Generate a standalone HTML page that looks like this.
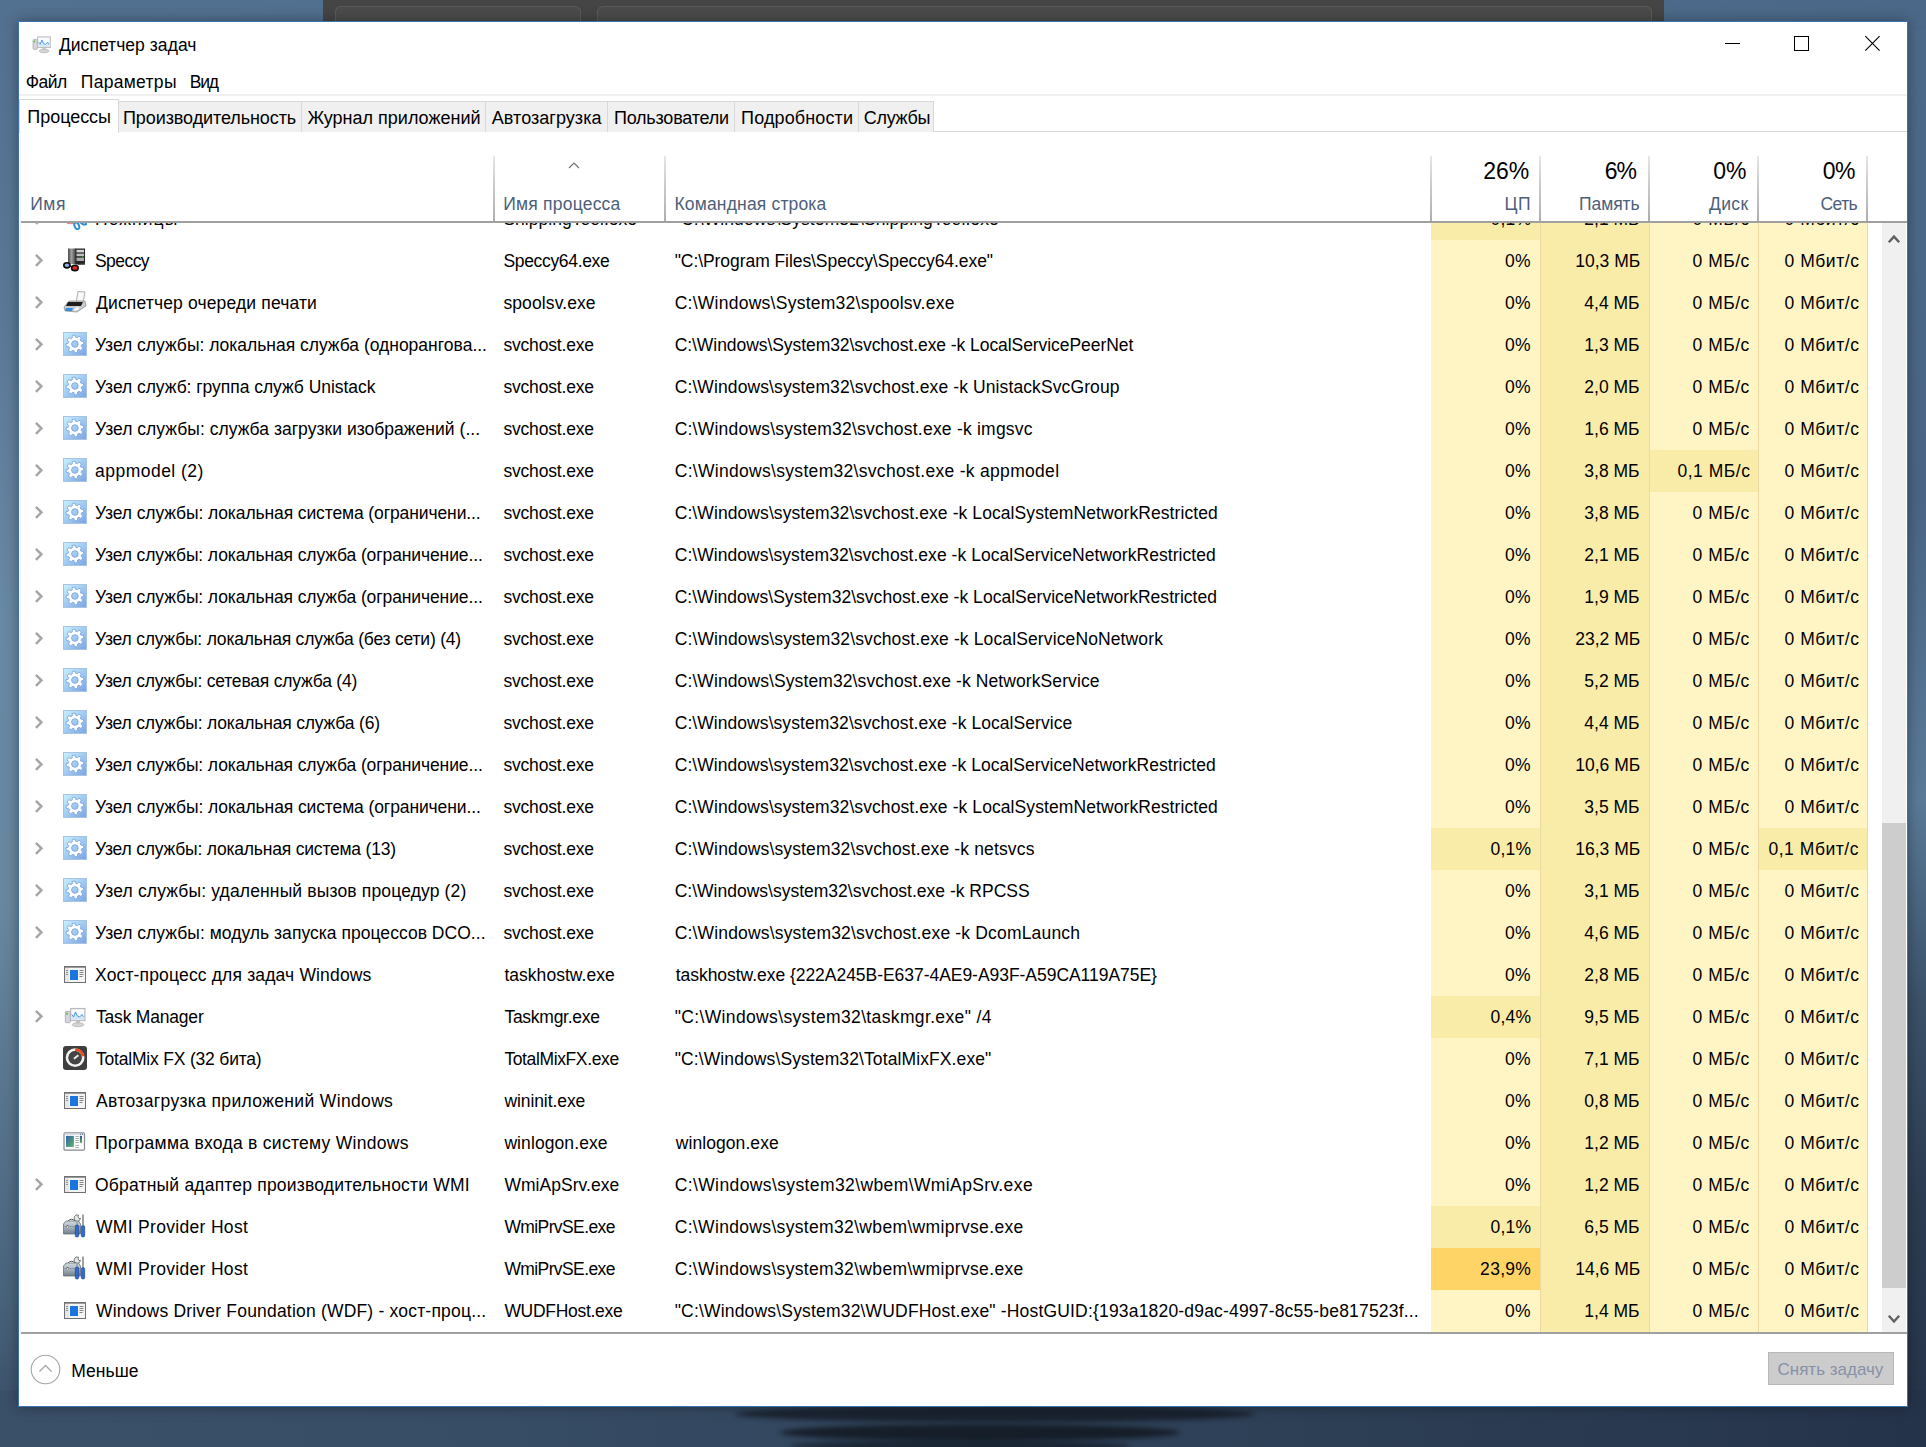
<!DOCTYPE html><html><head><meta charset="utf-8"><title>Диспетчер задач</title><style>

*{box-sizing:border-box}
html,body{margin:0;padding:0}
body{width:1926px;height:1447px;overflow:hidden;position:relative;font-family:'Liberation Sans', sans-serif;color:#000;background:#4e6c8a}
.a{position:absolute;white-space:pre;line-height:1}
.t{position:absolute;white-space:pre;font-size:17.5px;line-height:17.5px}
.r{text-align:right}
.hd{color:#4c607a}
.cell{position:absolute}
.sep{position:absolute;width:1px;background:#ecd9a2}
.hsep{position:absolute;width:2px;top:156px;height:65px;background:linear-gradient(#e6e6e6,#cbcbcb 45%,#aeaeae)}
.tab{position:absolute;top:101px;height:31px;background:#f0f0f0;border:1px solid #d9d9d9;border-bottom:none}

</style></head><body>
<div class="a" style="left:0;top:0;width:1926px;height:1447px;background:#4f6c8b"></div>
<div class="a" style="left:0;top:0;width:40px;height:1447px;background:linear-gradient(180deg,#52708f 0px,#5a7895 300px,#6888a3 620px,#6888a1 900px,#58748e 1100px,#48627b 1300px,#3d526b 1400px,#3a4f68 1447px)"></div>
<div class="a" style="left:1890px;top:0;width:36px;height:1447px;background:linear-gradient(180deg,#4d6a8a 0px,#4a6585 500px,#5a7a98 800px,#3b5269 1000px,#2c3c52 1200px,#25334a 1447px)"></div>
<div class="a" style="left:0;top:1390px;width:1926px;height:57px;background:linear-gradient(90deg,#3a4f68 0px,#374c65 500px,#30445b 1000px,#2b3c52 1500px,#25334a 1926px)"></div>
<div class="a" style="left:0;top:0;width:1926px;height:30px;background:linear-gradient(90deg,#52708f 0px,#506e8d 800px,#4b6888 1926px)"></div>
<div class="a" style="left:323px;top:0;width:1341px;height:22px;background:#454545"></div>
<div class="a" style="left:335px;top:6px;width:246px;height:18px;background:#4b4b4b;border:1px solid #5c5c5c;border-bottom:none;border-radius:6px 6px 0 0"></div>
<div class="a" style="left:597px;top:6px;width:1055px;height:18px;background:#4b4b4b;border:1px solid #5c5c5c;border-bottom:none;border-radius:6px 6px 0 0"></div>
<div class="a" style="left:735px;top:1406px;width:520px;height:16px;background:rgba(16,21,30,0.72);border-radius:50%;filter:blur(2.5px)"></div>
<div class="a" style="left:780px;top:1424px;width:400px;height:17px;background:rgba(14,19,27,0.78);border-radius:50%;filter:blur(2.5px)"></div>
<div class="a" style="left:790px;top:1440px;width:340px;height:12px;background:rgba(14,19,27,0.6);border-radius:50%;filter:blur(2.5px)"></div>
<div class="a" style="left:18px;top:21px;width:1890px;height:1386px;background:#fff;border:1px solid #3b73b0;box-shadow:0 0 12px rgba(0,0,0,0.35)"></div>
<div class="a" style="left:31px;top:33px;width:21px;height:20px"><svg width="21" height="21" viewBox="0 0 24 24"><rect x="2.3" y="7.3" width="5" height="11.4" rx="1" fill="#d6d4dc" stroke="#a8a6b0" stroke-width="0.8"/><rect x="3.2" y="8.6" width="1.6" height="2.2" fill="#5cc040"/><ellipse cx="15" cy="20.7" rx="5.8" ry="2" fill="#d4d4d4" stroke="#b0b0b0" stroke-width="0.7"/><rect x="13" y="16.5" width="4" height="3" fill="#c4c4c4"/><rect x="7.6" y="4.4" width="14.4" height="12.3" fill="#e4e4e6" stroke="#b2b2b6" stroke-width="0.9"/><rect x="8.7" y="5.5" width="12.2" height="10.2" fill="#f6fbff"/><path d="M8.7,10.5 L10.5,12.8 L12.5,8 L14,11.5 L16.5,13 L19,10.5 L20.9,12.8 L20.9,15.7 L8.7,15.7 Z" fill="#cfe6f6"/><polyline points="8.7,10.5 10.5,12.8 12.5,8 14,11.5 16.5,13 19,10.5 20.6,12.8" fill="none" stroke="#3a8ad0" stroke-width="0.9"/></svg></div>
<div class="a" style="left:58.90px;top:37px;font-size:17.5px;line-height:17.5px;letter-spacing:0.043px">Диспетчер задач</div>
<svg class="a" style="left:1700px;top:25px" width="200" height="40"><line x1="25" y1="18.5" x2="40" y2="18.5" stroke="#000" stroke-width="1"/><rect x="94.5" y="11.5" width="14" height="14" fill="none" stroke="#000" stroke-width="1"/><path d="M165.3,11.2 L179.6,25.6 M179.6,11.2 L165.3,25.6" stroke="#000" stroke-width="1.1"/></svg>
<div class="a" style="left:25.70px;top:74px;font-size:17.5px;line-height:17.5px;letter-spacing:-0.500px">Файл</div>
<div class="a" style="left:80.80px;top:74px;font-size:17.5px;line-height:17.5px;letter-spacing:0.300px">Параметры</div>
<div class="a" style="left:189.70px;top:74px;font-size:17.5px;line-height:17.5px;letter-spacing:-1.200px">Вид</div>
<div class="a" style="left:19px;top:94px;width:1888px;height:2px;background:#f0f0f0"></div>
<div class="a" style="left:19px;top:131px;width:1888px;height:1px;background:#d9d9d9"></div>
<div class="tab" style="left:118px;width:184px"></div>
<div class="a" style="left:123.00px;top:109px;font-size:18px;line-height:18px;letter-spacing:-0.088px">Производительность</div>
<div class="tab" style="left:301px;width:185px"></div>
<div class="a" style="left:307.40px;top:109px;font-size:18px;line-height:18px">Журнал приложений</div>
<div class="tab" style="left:485px;width:123px"></div>
<div class="a" style="left:491.80px;top:109px;font-size:18px;line-height:18px;letter-spacing:0.045px">Автозагрузка</div>
<div class="tab" style="left:607px;width:128px"></div>
<div class="a" style="left:614.00px;top:109px;font-size:18px;line-height:18px;letter-spacing:-0.227px">Пользователи</div>
<div class="tab" style="left:734px;width:125px"></div>
<div class="a" style="left:741.10px;top:109px;font-size:18px;line-height:18px;letter-spacing:0.130px">Подробности</div>
<div class="tab" style="left:858px;width:76px"></div>
<div class="a" style="left:863.80px;top:109px;font-size:18px;line-height:18px;letter-spacing:-0.320px">Службы</div>
<div class="a" style="left:19px;top:99px;width:100px;height:34px;background:#fff;border:1px solid #d9d9d9;border-bottom:none"></div>
<div class="a" style="left:27.30px;top:108px;font-size:18px;line-height:18px;letter-spacing:-0.043px">Процессы</div>
<div class="a hd" style="left:30.20px;top:196px;font-size:17.5px;line-height:17.5px;letter-spacing:0.600px">Имя</div>
<div class="a hd" style="left:503.30px;top:196px;font-size:17.5px;line-height:17.5px;letter-spacing:0.209px">Имя процесса</div>
<div class="a hd" style="left:674.50px;top:196px;font-size:17.5px;line-height:17.5px;letter-spacing:0.167px">Командная строка</div>
<svg class="a" style="left:566px;top:158px" width="16" height="14"><polyline points="3,10 8,5 13,10" fill="none" stroke="#707070" stroke-width="1.1"/></svg>
<div class="hsep" style="left:493px"></div>
<div class="hsep" style="left:664px"></div>
<div class="hsep" style="left:1430px"></div>
<div class="hsep" style="left:1539px"></div>
<div class="hsep" style="left:1648px"></div>
<div class="hsep" style="left:1757px"></div>
<div class="hsep" style="left:1866px"></div>
<div class="a" style="left:1483.20px;top:160px;font-size:23px;line-height:23px">26%</div>
<div class="a hd" style="left:1504.40px;top:196px;font-size:17.5px;line-height:17.5px;letter-spacing:0.600px">ЦП</div>
<div class="a" style="left:1604.70px;top:160px;font-size:23px;line-height:23px;letter-spacing:-0.900px">6%</div>
<div class="a hd" style="left:1579.10px;top:196px;font-size:17.5px;line-height:17.5px;letter-spacing:-0.080px">Память</div>
<div class="a" style="left:1713.30px;top:160px;font-size:23px;line-height:23px;letter-spacing:-0.100px">0%</div>
<div class="a hd" style="left:1709.00px;top:196px;font-size:17.5px;line-height:17.5px;letter-spacing:0.367px">Диск</div>
<div class="a" style="left:1822.70px;top:160px;font-size:23px;line-height:23px;letter-spacing:-0.400px">0%</div>
<div class="a hd" style="left:1820.50px;top:196px;font-size:17.5px;line-height:17.5px;letter-spacing:-0.567px">Сеть</div>
<div class="a" style="left:20px;top:223px;width:1862px;height:1109px;overflow:hidden">
<div class="cell" style="left:1411px;top:-25px;width:109px;height:42px;background:#f9eca8"></div>
<div class="cell" style="left:1521px;top:-25px;width:108px;height:42px;background:#f9eca8"></div>
<div class="cell" style="left:1630px;top:-25px;width:108px;height:42px;background:#fff4c4"></div>
<div class="cell" style="left:1739px;top:-25px;width:108px;height:42px;background:#fff4c4"></div>
<svg class="a" style="left:10px;top:-17px" width="18" height="26"><polyline points="5.9,6.85 11.4,12.35 5.9,17.85" fill="none" stroke="#a6a6a6" stroke-width="2.5"/></svg>
<div class="a" style="left:43px;top:-17px;width:24px;height:24px"><svg width="24" height="24" viewBox="0 0 24 24"><path d="M4,17.5 L11,17.5" stroke="#e88" stroke-width="1.2"/><ellipse cx="13.8" cy="19.9" rx="2.2" ry="3.5" transform="rotate(-22 13.8 19.9)" fill="none" stroke="#2f8fd0" stroke-width="2"/><ellipse cx="20.2" cy="15.8" rx="2.2" ry="3.6" transform="rotate(-62 20.2 15.8)" fill="none" stroke="#2f8fd0" stroke-width="2"/></svg></div>
<div class="a" style="left:75.00px;top:-12px;font-size:17.5px;line-height:17.5px;letter-spacing:1.050px">Ножницы</div>
<div class="a" style="left:483.40px;top:-12px;font-size:17.5px;line-height:17.5px;letter-spacing:0.027px">SnippingTool.exe</div>
<div class="a" style="left:654.70px;top:-12px;font-size:17.5px;line-height:17.5px;letter-spacing:0.103px">"C:\Windows\System32\SnippingTool.exe"</div>
<div class="a" style="left:1470.40px;top:-12px;font-size:17.5px;line-height:17.5px;letter-spacing:0.300px">0,1%</div>
<div class="a" style="left:1564.30px;top:-12px;font-size:17.5px;line-height:17.5px">2,1 МБ</div>
<div class="a" style="left:1672.50px;top:-12px;font-size:17.5px;line-height:17.5px;letter-spacing:0.520px">0 МБ/с</div>
<div class="a" style="left:1764.50px;top:-12px;font-size:17.5px;line-height:17.5px;letter-spacing:0.543px">0 Мбит/с</div>
<div class="cell" style="left:1411px;top:17px;width:109px;height:42px;background:#fff4c4"></div>
<div class="cell" style="left:1521px;top:17px;width:108px;height:42px;background:#f9eca8"></div>
<div class="cell" style="left:1630px;top:17px;width:108px;height:42px;background:#fff4c4"></div>
<div class="cell" style="left:1739px;top:17px;width:108px;height:42px;background:#fff4c4"></div>
<svg class="a" style="left:10px;top:25px" width="18" height="26"><polyline points="5.9,6.85 11.4,12.35 5.9,17.85" fill="none" stroke="#a6a6a6" stroke-width="2.5"/></svg>
<div class="a" style="left:43px;top:25px;width:24px;height:24px"><svg width="24" height="24" viewBox="0 0 24 24"><defs><linearGradient id="sp1" x1="0" y1="0" x2="1" y2="0"><stop offset="0" stop-color="#4a4a4a"/><stop offset="0.45" stop-color="#a0a0a0"/><stop offset="1" stop-color="#3a3a3a"/></linearGradient></defs><rect x="5" y="0.5" width="8" height="15.5" fill="url(#sp1)"/><rect x="12.5" y="0.5" width="9.5" height="16" fill="#262626"/><rect x="13.5" y="1.8" width="7.5" height="2.6" fill="#d4d4d4"/><rect x="13.5" y="5.6" width="7.5" height="2.6" fill="#c0c0c0"/><rect x="13.5" y="9.6" width="7.5" height="3.4" fill="#a8a8a8"/><circle cx="19.6" cy="8.9" r="0.6" fill="#3c3"/><line x1="15" y1="16.5" x2="22" y2="16" stroke="#555" stroke-width="1"/><ellipse cx="3.9" cy="17.3" rx="3.1" ry="2.6" fill="#8fb0ea" stroke="#0c0c0c" stroke-width="1.6"/><ellipse cx="11.9" cy="19.9" rx="3.3" ry="2.7" fill="#e52525" stroke="#0c0c0c" stroke-width="1.6"/><path d="M6.8,17.8 L8.8,18.8" stroke="#111" stroke-width="1.4"/></svg></div>
<div class="a" style="left:75.00px;top:30px;font-size:17.5px;line-height:17.5px;letter-spacing:-0.560px">Speccy</div>
<div class="a" style="left:483.40px;top:30px;font-size:17.5px;line-height:17.5px;letter-spacing:-0.327px">Speccy64.exe</div>
<div class="a" style="left:654.70px;top:30px;font-size:17.5px;line-height:17.5px;letter-spacing:-0.065px">"C:\Program Files\Speccy\Speccy64.exe"</div>
<div class="a" style="left:1485.00px;top:30px;font-size:17.5px;line-height:17.5px;letter-spacing:0.300px">0%</div>
<div class="a" style="left:1555.30px;top:30px;font-size:17.5px;line-height:17.5px">10,3 МБ</div>
<div class="a" style="left:1672.50px;top:30px;font-size:17.5px;line-height:17.5px;letter-spacing:0.520px">0 МБ/с</div>
<div class="a" style="left:1764.50px;top:30px;font-size:17.5px;line-height:17.5px;letter-spacing:0.543px">0 Мбит/с</div>
<div class="cell" style="left:1411px;top:59px;width:109px;height:42px;background:#fff4c4"></div>
<div class="cell" style="left:1521px;top:59px;width:108px;height:42px;background:#f9eca8"></div>
<div class="cell" style="left:1630px;top:59px;width:108px;height:42px;background:#fff4c4"></div>
<div class="cell" style="left:1739px;top:59px;width:108px;height:42px;background:#fff4c4"></div>
<svg class="a" style="left:10px;top:67px" width="18" height="26"><polyline points="5.9,6.85 11.4,12.35 5.9,17.85" fill="none" stroke="#a6a6a6" stroke-width="2.5"/></svg>
<div class="a" style="left:43px;top:67px;width:24px;height:24px"><svg width="24" height="24" viewBox="0 0 24 24"><path d="M13,13 L15,1.5 L22,2 L20,13 Z" fill="#f8f8f8" stroke="#9a9a9a" stroke-width="0.8"/><path d="M1,17 L6,11 L22,11 L23,16 L14,22 L2,21 Z" fill="#c8ccd0" stroke="#888" stroke-width="0.7"/><path d="M5,12 L20,12 L18,16 L3,16 Z" fill="#1e1e1e"/><path d="M3,18 L10,18 L9,21 L2,21 Z" fill="#3a8ee0"/><path d="M12,18 L16,17 L15,20 L11,21 Z" fill="#fff"/></svg></div>
<div class="a" style="left:76.00px;top:72px;font-size:17.5px;line-height:17.5px;letter-spacing:0.148px">Диспетчер очереди печати</div>
<div class="a" style="left:483.40px;top:72px;font-size:17.5px;line-height:17.5px;letter-spacing:0.110px">spoolsv.exe</div>
<div class="a" style="left:654.70px;top:72px;font-size:17.5px;line-height:17.5px;letter-spacing:0.257px">C:\Windows\System32\spoolsv.exe</div>
<div class="a" style="left:1485.00px;top:72px;font-size:17.5px;line-height:17.5px;letter-spacing:0.300px">0%</div>
<div class="a" style="left:1564.30px;top:72px;font-size:17.5px;line-height:17.5px">4,4 МБ</div>
<div class="a" style="left:1672.50px;top:72px;font-size:17.5px;line-height:17.5px;letter-spacing:0.520px">0 МБ/с</div>
<div class="a" style="left:1764.50px;top:72px;font-size:17.5px;line-height:17.5px;letter-spacing:0.543px">0 Мбит/с</div>
<div class="cell" style="left:1411px;top:101px;width:109px;height:42px;background:#fff4c4"></div>
<div class="cell" style="left:1521px;top:101px;width:108px;height:42px;background:#f9eca8"></div>
<div class="cell" style="left:1630px;top:101px;width:108px;height:42px;background:#fff4c4"></div>
<div class="cell" style="left:1739px;top:101px;width:108px;height:42px;background:#fff4c4"></div>
<svg class="a" style="left:10px;top:109px" width="18" height="26"><polyline points="5.9,6.85 11.4,12.35 5.9,17.85" fill="none" stroke="#a6a6a6" stroke-width="2.5"/></svg>
<div class="a" style="left:43px;top:109px;width:24px;height:24px"><svg width="24" height="24" viewBox="0 0 24 24"><defs><linearGradient id="gg3" x1="0" y1="0" x2="1" y2="1"><stop offset="0" stop-color="#c8f2fe"/><stop offset="1" stop-color="#7aa3e4"/></linearGradient></defs><rect x="0.5" y="0.5" width="23" height="23" fill="url(#gg3)" stroke="#a9c3e2"/><use href="#gearshape"/></svg></div>
<div class="a" style="left:75.00px;top:114px;font-size:17.5px;line-height:17.5px;letter-spacing:-0.014px">Узел службы: локальная служба (одноранговa...</div>
<div class="a" style="left:483.40px;top:114px;font-size:17.5px;line-height:17.5px;letter-spacing:-0.180px">svchost.exe</div>
<div class="a" style="left:654.70px;top:114px;font-size:17.5px;line-height:17.5px;letter-spacing:-0.064px">C:\Windows\System32\svchost.exe -k LocalServicePeerNet</div>
<div class="a" style="left:1485.00px;top:114px;font-size:17.5px;line-height:17.5px;letter-spacing:0.300px">0%</div>
<div class="a" style="left:1564.30px;top:114px;font-size:17.5px;line-height:17.5px">1,3 МБ</div>
<div class="a" style="left:1672.50px;top:114px;font-size:17.5px;line-height:17.5px;letter-spacing:0.520px">0 МБ/с</div>
<div class="a" style="left:1764.50px;top:114px;font-size:17.5px;line-height:17.5px;letter-spacing:0.543px">0 Мбит/с</div>
<div class="cell" style="left:1411px;top:143px;width:109px;height:42px;background:#fff4c4"></div>
<div class="cell" style="left:1521px;top:143px;width:108px;height:42px;background:#f9eca8"></div>
<div class="cell" style="left:1630px;top:143px;width:108px;height:42px;background:#fff4c4"></div>
<div class="cell" style="left:1739px;top:143px;width:108px;height:42px;background:#fff4c4"></div>
<svg class="a" style="left:10px;top:151px" width="18" height="26"><polyline points="5.9,6.85 11.4,12.35 5.9,17.85" fill="none" stroke="#a6a6a6" stroke-width="2.5"/></svg>
<div class="a" style="left:43px;top:151px;width:24px;height:24px"><svg width="24" height="24" viewBox="0 0 24 24"><defs><linearGradient id="gg4" x1="0" y1="0" x2="1" y2="1"><stop offset="0" stop-color="#c8f2fe"/><stop offset="1" stop-color="#7aa3e4"/></linearGradient></defs><rect x="0.5" y="0.5" width="23" height="23" fill="url(#gg4)" stroke="#a9c3e2"/><use href="#gearshape"/></svg></div>
<div class="a" style="left:75.00px;top:156px;font-size:17.5px;line-height:17.5px;letter-spacing:-0.041px">Узел служб: группа служб Unistack</div>
<div class="a" style="left:483.40px;top:156px;font-size:17.5px;line-height:17.5px;letter-spacing:-0.180px">svchost.exe</div>
<div class="a" style="left:654.70px;top:156px;font-size:17.5px;line-height:17.5px;letter-spacing:0.104px">C:\Windows\system32\svchost.exe -k UnistackSvcGroup</div>
<div class="a" style="left:1485.00px;top:156px;font-size:17.5px;line-height:17.5px;letter-spacing:0.300px">0%</div>
<div class="a" style="left:1564.30px;top:156px;font-size:17.5px;line-height:17.5px">2,0 МБ</div>
<div class="a" style="left:1672.50px;top:156px;font-size:17.5px;line-height:17.5px;letter-spacing:0.520px">0 МБ/с</div>
<div class="a" style="left:1764.50px;top:156px;font-size:17.5px;line-height:17.5px;letter-spacing:0.543px">0 Мбит/с</div>
<div class="cell" style="left:1411px;top:185px;width:109px;height:42px;background:#fff4c4"></div>
<div class="cell" style="left:1521px;top:185px;width:108px;height:42px;background:#f9eca8"></div>
<div class="cell" style="left:1630px;top:185px;width:108px;height:42px;background:#fff4c4"></div>
<div class="cell" style="left:1739px;top:185px;width:108px;height:42px;background:#fff4c4"></div>
<svg class="a" style="left:10px;top:193px" width="18" height="26"><polyline points="5.9,6.85 11.4,12.35 5.9,17.85" fill="none" stroke="#a6a6a6" stroke-width="2.5"/></svg>
<div class="a" style="left:43px;top:193px;width:24px;height:24px"><svg width="24" height="24" viewBox="0 0 24 24"><defs><linearGradient id="gg5" x1="0" y1="0" x2="1" y2="1"><stop offset="0" stop-color="#c8f2fe"/><stop offset="1" stop-color="#7aa3e4"/></linearGradient></defs><rect x="0.5" y="0.5" width="23" height="23" fill="url(#gg5)" stroke="#a9c3e2"/><use href="#gearshape"/></svg></div>
<div class="a" style="left:75.00px;top:198px;font-size:17.5px;line-height:17.5px;letter-spacing:0.027px">Узел службы: служба загрузки изображений (...</div>
<div class="a" style="left:483.40px;top:198px;font-size:17.5px;line-height:17.5px;letter-spacing:-0.180px">svchost.exe</div>
<div class="a" style="left:654.70px;top:198px;font-size:17.5px;line-height:17.5px;letter-spacing:0.218px">C:\Windows\system32\svchost.exe -k imgsvc</div>
<div class="a" style="left:1485.00px;top:198px;font-size:17.5px;line-height:17.5px;letter-spacing:0.300px">0%</div>
<div class="a" style="left:1564.30px;top:198px;font-size:17.5px;line-height:17.5px">1,6 МБ</div>
<div class="a" style="left:1672.50px;top:198px;font-size:17.5px;line-height:17.5px;letter-spacing:0.520px">0 МБ/с</div>
<div class="a" style="left:1764.50px;top:198px;font-size:17.5px;line-height:17.5px;letter-spacing:0.543px">0 Мбит/с</div>
<div class="cell" style="left:1411px;top:227px;width:109px;height:42px;background:#fff4c4"></div>
<div class="cell" style="left:1521px;top:227px;width:108px;height:42px;background:#f9eca8"></div>
<div class="cell" style="left:1630px;top:227px;width:108px;height:42px;background:#f9eca8"></div>
<div class="cell" style="left:1739px;top:227px;width:108px;height:42px;background:#fff4c4"></div>
<svg class="a" style="left:10px;top:235px" width="18" height="26"><polyline points="5.9,6.85 11.4,12.35 5.9,17.85" fill="none" stroke="#a6a6a6" stroke-width="2.5"/></svg>
<div class="a" style="left:43px;top:235px;width:24px;height:24px"><svg width="24" height="24" viewBox="0 0 24 24"><defs><linearGradient id="gg6" x1="0" y1="0" x2="1" y2="1"><stop offset="0" stop-color="#c8f2fe"/><stop offset="1" stop-color="#7aa3e4"/></linearGradient></defs><rect x="0.5" y="0.5" width="23" height="23" fill="url(#gg6)" stroke="#a9c3e2"/><use href="#gearshape"/></svg></div>
<div class="a" style="left:75.00px;top:240px;font-size:17.5px;line-height:17.5px;letter-spacing:0.482px">appmodel (2)</div>
<div class="a" style="left:483.40px;top:240px;font-size:17.5px;line-height:17.5px;letter-spacing:-0.180px">svchost.exe</div>
<div class="a" style="left:654.70px;top:240px;font-size:17.5px;line-height:17.5px;letter-spacing:0.305px">C:\Windows\system32\svchost.exe -k appmodel</div>
<div class="a" style="left:1485.00px;top:240px;font-size:17.5px;line-height:17.5px;letter-spacing:0.300px">0%</div>
<div class="a" style="left:1564.30px;top:240px;font-size:17.5px;line-height:17.5px">3,8 МБ</div>
<div class="a" style="left:1657.46px;top:240px;font-size:17.5px;line-height:17.5px;letter-spacing:0.520px">0,1 МБ/с</div>
<div class="a" style="left:1764.50px;top:240px;font-size:17.5px;line-height:17.5px;letter-spacing:0.543px">0 Мбит/с</div>
<div class="cell" style="left:1411px;top:269px;width:109px;height:42px;background:#fff4c4"></div>
<div class="cell" style="left:1521px;top:269px;width:108px;height:42px;background:#f9eca8"></div>
<div class="cell" style="left:1630px;top:269px;width:108px;height:42px;background:#fff4c4"></div>
<div class="cell" style="left:1739px;top:269px;width:108px;height:42px;background:#fff4c4"></div>
<svg class="a" style="left:10px;top:277px" width="18" height="26"><polyline points="5.9,6.85 11.4,12.35 5.9,17.85" fill="none" stroke="#a6a6a6" stroke-width="2.5"/></svg>
<div class="a" style="left:43px;top:277px;width:24px;height:24px"><svg width="24" height="24" viewBox="0 0 24 24"><defs><linearGradient id="gg7" x1="0" y1="0" x2="1" y2="1"><stop offset="0" stop-color="#c8f2fe"/><stop offset="1" stop-color="#7aa3e4"/></linearGradient></defs><rect x="0.5" y="0.5" width="23" height="23" fill="url(#gg7)" stroke="#a9c3e2"/><use href="#gearshape"/></svg></div>
<div class="a" style="left:75.00px;top:282px;font-size:17.5px;line-height:17.5px;letter-spacing:-0.109px">Узел службы: локальная система (ограничени...</div>
<div class="a" style="left:483.40px;top:282px;font-size:17.5px;line-height:17.5px;letter-spacing:-0.180px">svchost.exe</div>
<div class="a" style="left:654.70px;top:282px;font-size:17.5px;line-height:17.5px;letter-spacing:0.085px">C:\Windows\system32\svchost.exe -k LocalSystemNetworkRestricted</div>
<div class="a" style="left:1485.00px;top:282px;font-size:17.5px;line-height:17.5px;letter-spacing:0.300px">0%</div>
<div class="a" style="left:1564.30px;top:282px;font-size:17.5px;line-height:17.5px">3,8 МБ</div>
<div class="a" style="left:1672.50px;top:282px;font-size:17.5px;line-height:17.5px;letter-spacing:0.520px">0 МБ/с</div>
<div class="a" style="left:1764.50px;top:282px;font-size:17.5px;line-height:17.5px;letter-spacing:0.543px">0 Мбит/с</div>
<div class="cell" style="left:1411px;top:311px;width:109px;height:42px;background:#fff4c4"></div>
<div class="cell" style="left:1521px;top:311px;width:108px;height:42px;background:#f9eca8"></div>
<div class="cell" style="left:1630px;top:311px;width:108px;height:42px;background:#fff4c4"></div>
<div class="cell" style="left:1739px;top:311px;width:108px;height:42px;background:#fff4c4"></div>
<svg class="a" style="left:10px;top:319px" width="18" height="26"><polyline points="5.9,6.85 11.4,12.35 5.9,17.85" fill="none" stroke="#a6a6a6" stroke-width="2.5"/></svg>
<div class="a" style="left:43px;top:319px;width:24px;height:24px"><svg width="24" height="24" viewBox="0 0 24 24"><defs><linearGradient id="gg8" x1="0" y1="0" x2="1" y2="1"><stop offset="0" stop-color="#c8f2fe"/><stop offset="1" stop-color="#7aa3e4"/></linearGradient></defs><rect x="0.5" y="0.5" width="23" height="23" fill="url(#gg8)" stroke="#a9c3e2"/><use href="#gearshape"/></svg></div>
<div class="a" style="left:75.00px;top:324px;font-size:17.5px;line-height:17.5px;letter-spacing:-0.114px">Узел службы: локальная служба (ограничение...</div>
<div class="a" style="left:483.40px;top:324px;font-size:17.5px;line-height:17.5px;letter-spacing:-0.180px">svchost.exe</div>
<div class="a" style="left:654.70px;top:324px;font-size:17.5px;line-height:17.5px;letter-spacing:0.052px">C:\Windows\system32\svchost.exe -k LocalServiceNetworkRestricted</div>
<div class="a" style="left:1485.00px;top:324px;font-size:17.5px;line-height:17.5px;letter-spacing:0.300px">0%</div>
<div class="a" style="left:1564.30px;top:324px;font-size:17.5px;line-height:17.5px">2,1 МБ</div>
<div class="a" style="left:1672.50px;top:324px;font-size:17.5px;line-height:17.5px;letter-spacing:0.520px">0 МБ/с</div>
<div class="a" style="left:1764.50px;top:324px;font-size:17.5px;line-height:17.5px;letter-spacing:0.543px">0 Мбит/с</div>
<div class="cell" style="left:1411px;top:353px;width:109px;height:42px;background:#fff4c4"></div>
<div class="cell" style="left:1521px;top:353px;width:108px;height:42px;background:#f9eca8"></div>
<div class="cell" style="left:1630px;top:353px;width:108px;height:42px;background:#fff4c4"></div>
<div class="cell" style="left:1739px;top:353px;width:108px;height:42px;background:#fff4c4"></div>
<svg class="a" style="left:10px;top:361px" width="18" height="26"><polyline points="5.9,6.85 11.4,12.35 5.9,17.85" fill="none" stroke="#a6a6a6" stroke-width="2.5"/></svg>
<div class="a" style="left:43px;top:361px;width:24px;height:24px"><svg width="24" height="24" viewBox="0 0 24 24"><defs><linearGradient id="gg9" x1="0" y1="0" x2="1" y2="1"><stop offset="0" stop-color="#c8f2fe"/><stop offset="1" stop-color="#7aa3e4"/></linearGradient></defs><rect x="0.5" y="0.5" width="23" height="23" fill="url(#gg9)" stroke="#a9c3e2"/><use href="#gearshape"/></svg></div>
<div class="a" style="left:75.00px;top:366px;font-size:17.5px;line-height:17.5px;letter-spacing:-0.114px">Узел службы: локальная служба (ограничение...</div>
<div class="a" style="left:483.40px;top:366px;font-size:17.5px;line-height:17.5px;letter-spacing:-0.180px">svchost.exe</div>
<div class="a" style="left:654.70px;top:366px;font-size:17.5px;line-height:17.5px;letter-spacing:0.024px">C:\Windows\System32\svchost.exe -k LocalServiceNetworkRestricted</div>
<div class="a" style="left:1485.00px;top:366px;font-size:17.5px;line-height:17.5px;letter-spacing:0.300px">0%</div>
<div class="a" style="left:1564.30px;top:366px;font-size:17.5px;line-height:17.5px">1,9 МБ</div>
<div class="a" style="left:1672.50px;top:366px;font-size:17.5px;line-height:17.5px;letter-spacing:0.520px">0 МБ/с</div>
<div class="a" style="left:1764.50px;top:366px;font-size:17.5px;line-height:17.5px;letter-spacing:0.543px">0 Мбит/с</div>
<div class="cell" style="left:1411px;top:395px;width:109px;height:42px;background:#fff4c4"></div>
<div class="cell" style="left:1521px;top:395px;width:108px;height:42px;background:#f9eca8"></div>
<div class="cell" style="left:1630px;top:395px;width:108px;height:42px;background:#fff4c4"></div>
<div class="cell" style="left:1739px;top:395px;width:108px;height:42px;background:#fff4c4"></div>
<svg class="a" style="left:10px;top:403px" width="18" height="26"><polyline points="5.9,6.85 11.4,12.35 5.9,17.85" fill="none" stroke="#a6a6a6" stroke-width="2.5"/></svg>
<div class="a" style="left:43px;top:403px;width:24px;height:24px"><svg width="24" height="24" viewBox="0 0 24 24"><defs><linearGradient id="gg10" x1="0" y1="0" x2="1" y2="1"><stop offset="0" stop-color="#c8f2fe"/><stop offset="1" stop-color="#7aa3e4"/></linearGradient></defs><rect x="0.5" y="0.5" width="23" height="23" fill="url(#gg10)" stroke="#a9c3e2"/><use href="#gearshape"/></svg></div>
<div class="a" style="left:75.00px;top:408px;font-size:17.5px;line-height:17.5px;letter-spacing:-0.205px">Узел службы: локальная служба (без сети) (4)</div>
<div class="a" style="left:483.40px;top:408px;font-size:17.5px;line-height:17.5px;letter-spacing:-0.180px">svchost.exe</div>
<div class="a" style="left:654.70px;top:408px;font-size:17.5px;line-height:17.5px;letter-spacing:0.124px">C:\Windows\system32\svchost.exe -k LocalServiceNoNetwork</div>
<div class="a" style="left:1485.00px;top:408px;font-size:17.5px;line-height:17.5px;letter-spacing:0.300px">0%</div>
<div class="a" style="left:1555.30px;top:408px;font-size:17.5px;line-height:17.5px">23,2 МБ</div>
<div class="a" style="left:1672.50px;top:408px;font-size:17.5px;line-height:17.5px;letter-spacing:0.520px">0 МБ/с</div>
<div class="a" style="left:1764.50px;top:408px;font-size:17.5px;line-height:17.5px;letter-spacing:0.543px">0 Мбит/с</div>
<div class="cell" style="left:1411px;top:437px;width:109px;height:42px;background:#fff4c4"></div>
<div class="cell" style="left:1521px;top:437px;width:108px;height:42px;background:#f9eca8"></div>
<div class="cell" style="left:1630px;top:437px;width:108px;height:42px;background:#fff4c4"></div>
<div class="cell" style="left:1739px;top:437px;width:108px;height:42px;background:#fff4c4"></div>
<svg class="a" style="left:10px;top:445px" width="18" height="26"><polyline points="5.9,6.85 11.4,12.35 5.9,17.85" fill="none" stroke="#a6a6a6" stroke-width="2.5"/></svg>
<div class="a" style="left:43px;top:445px;width:24px;height:24px"><svg width="24" height="24" viewBox="0 0 24 24"><defs><linearGradient id="gg11" x1="0" y1="0" x2="1" y2="1"><stop offset="0" stop-color="#c8f2fe"/><stop offset="1" stop-color="#7aa3e4"/></linearGradient></defs><rect x="0.5" y="0.5" width="23" height="23" fill="url(#gg11)" stroke="#a9c3e2"/><use href="#gearshape"/></svg></div>
<div class="a" style="left:75.00px;top:450px;font-size:17.5px;line-height:17.5px;letter-spacing:-0.200px">Узел службы: сетевая служба (4)</div>
<div class="a" style="left:483.40px;top:450px;font-size:17.5px;line-height:17.5px;letter-spacing:-0.180px">svchost.exe</div>
<div class="a" style="left:654.70px;top:450px;font-size:17.5px;line-height:17.5px;letter-spacing:0.098px">C:\Windows\System32\svchost.exe -k NetworkService</div>
<div class="a" style="left:1485.00px;top:450px;font-size:17.5px;line-height:17.5px;letter-spacing:0.300px">0%</div>
<div class="a" style="left:1564.30px;top:450px;font-size:17.5px;line-height:17.5px">5,2 МБ</div>
<div class="a" style="left:1672.50px;top:450px;font-size:17.5px;line-height:17.5px;letter-spacing:0.520px">0 МБ/с</div>
<div class="a" style="left:1764.50px;top:450px;font-size:17.5px;line-height:17.5px;letter-spacing:0.543px">0 Мбит/с</div>
<div class="cell" style="left:1411px;top:479px;width:109px;height:42px;background:#fff4c4"></div>
<div class="cell" style="left:1521px;top:479px;width:108px;height:42px;background:#f9eca8"></div>
<div class="cell" style="left:1630px;top:479px;width:108px;height:42px;background:#fff4c4"></div>
<div class="cell" style="left:1739px;top:479px;width:108px;height:42px;background:#fff4c4"></div>
<svg class="a" style="left:10px;top:487px" width="18" height="26"><polyline points="5.9,6.85 11.4,12.35 5.9,17.85" fill="none" stroke="#a6a6a6" stroke-width="2.5"/></svg>
<div class="a" style="left:43px;top:487px;width:24px;height:24px"><svg width="24" height="24" viewBox="0 0 24 24"><defs><linearGradient id="gg12" x1="0" y1="0" x2="1" y2="1"><stop offset="0" stop-color="#c8f2fe"/><stop offset="1" stop-color="#7aa3e4"/></linearGradient></defs><rect x="0.5" y="0.5" width="23" height="23" fill="url(#gg12)" stroke="#a9c3e2"/><use href="#gearshape"/></svg></div>
<div class="a" style="left:75.00px;top:492px;font-size:17.5px;line-height:17.5px;letter-spacing:-0.178px">Узел службы: локальная служба (6)</div>
<div class="a" style="left:483.40px;top:492px;font-size:17.5px;line-height:17.5px;letter-spacing:-0.180px">svchost.exe</div>
<div class="a" style="left:654.70px;top:492px;font-size:17.5px;line-height:17.5px;letter-spacing:0.059px">C:\Windows\system32\svchost.exe -k LocalService</div>
<div class="a" style="left:1485.00px;top:492px;font-size:17.5px;line-height:17.5px;letter-spacing:0.300px">0%</div>
<div class="a" style="left:1564.30px;top:492px;font-size:17.5px;line-height:17.5px">4,4 МБ</div>
<div class="a" style="left:1672.50px;top:492px;font-size:17.5px;line-height:17.5px;letter-spacing:0.520px">0 МБ/с</div>
<div class="a" style="left:1764.50px;top:492px;font-size:17.5px;line-height:17.5px;letter-spacing:0.543px">0 Мбит/с</div>
<div class="cell" style="left:1411px;top:521px;width:109px;height:42px;background:#fff4c4"></div>
<div class="cell" style="left:1521px;top:521px;width:108px;height:42px;background:#f9eca8"></div>
<div class="cell" style="left:1630px;top:521px;width:108px;height:42px;background:#fff4c4"></div>
<div class="cell" style="left:1739px;top:521px;width:108px;height:42px;background:#fff4c4"></div>
<svg class="a" style="left:10px;top:529px" width="18" height="26"><polyline points="5.9,6.85 11.4,12.35 5.9,17.85" fill="none" stroke="#a6a6a6" stroke-width="2.5"/></svg>
<div class="a" style="left:43px;top:529px;width:24px;height:24px"><svg width="24" height="24" viewBox="0 0 24 24"><defs><linearGradient id="gg13" x1="0" y1="0" x2="1" y2="1"><stop offset="0" stop-color="#c8f2fe"/><stop offset="1" stop-color="#7aa3e4"/></linearGradient></defs><rect x="0.5" y="0.5" width="23" height="23" fill="url(#gg13)" stroke="#a9c3e2"/><use href="#gearshape"/></svg></div>
<div class="a" style="left:75.00px;top:534px;font-size:17.5px;line-height:17.5px;letter-spacing:-0.114px">Узел службы: локальная служба (ограничение...</div>
<div class="a" style="left:483.40px;top:534px;font-size:17.5px;line-height:17.5px;letter-spacing:-0.180px">svchost.exe</div>
<div class="a" style="left:654.70px;top:534px;font-size:17.5px;line-height:17.5px;letter-spacing:0.052px">C:\Windows\system32\svchost.exe -k LocalServiceNetworkRestricted</div>
<div class="a" style="left:1485.00px;top:534px;font-size:17.5px;line-height:17.5px;letter-spacing:0.300px">0%</div>
<div class="a" style="left:1555.30px;top:534px;font-size:17.5px;line-height:17.5px">10,6 МБ</div>
<div class="a" style="left:1672.50px;top:534px;font-size:17.5px;line-height:17.5px;letter-spacing:0.520px">0 МБ/с</div>
<div class="a" style="left:1764.50px;top:534px;font-size:17.5px;line-height:17.5px;letter-spacing:0.543px">0 Мбит/с</div>
<div class="cell" style="left:1411px;top:563px;width:109px;height:42px;background:#fff4c4"></div>
<div class="cell" style="left:1521px;top:563px;width:108px;height:42px;background:#f9eca8"></div>
<div class="cell" style="left:1630px;top:563px;width:108px;height:42px;background:#fff4c4"></div>
<div class="cell" style="left:1739px;top:563px;width:108px;height:42px;background:#fff4c4"></div>
<svg class="a" style="left:10px;top:571px" width="18" height="26"><polyline points="5.9,6.85 11.4,12.35 5.9,17.85" fill="none" stroke="#a6a6a6" stroke-width="2.5"/></svg>
<div class="a" style="left:43px;top:571px;width:24px;height:24px"><svg width="24" height="24" viewBox="0 0 24 24"><defs><linearGradient id="gg14" x1="0" y1="0" x2="1" y2="1"><stop offset="0" stop-color="#c8f2fe"/><stop offset="1" stop-color="#7aa3e4"/></linearGradient></defs><rect x="0.5" y="0.5" width="23" height="23" fill="url(#gg14)" stroke="#a9c3e2"/><use href="#gearshape"/></svg></div>
<div class="a" style="left:75.00px;top:576px;font-size:17.5px;line-height:17.5px;letter-spacing:-0.105px">Узел службы: локальная система (ограничени...</div>
<div class="a" style="left:483.40px;top:576px;font-size:17.5px;line-height:17.5px;letter-spacing:-0.180px">svchost.exe</div>
<div class="a" style="left:654.70px;top:576px;font-size:17.5px;line-height:17.5px;letter-spacing:0.085px">C:\Windows\system32\svchost.exe -k LocalSystemNetworkRestricted</div>
<div class="a" style="left:1485.00px;top:576px;font-size:17.5px;line-height:17.5px;letter-spacing:0.300px">0%</div>
<div class="a" style="left:1564.30px;top:576px;font-size:17.5px;line-height:17.5px">3,5 МБ</div>
<div class="a" style="left:1672.50px;top:576px;font-size:17.5px;line-height:17.5px;letter-spacing:0.520px">0 МБ/с</div>
<div class="a" style="left:1764.50px;top:576px;font-size:17.5px;line-height:17.5px;letter-spacing:0.543px">0 Мбит/с</div>
<div class="cell" style="left:1411px;top:605px;width:109px;height:42px;background:#f9eca8"></div>
<div class="cell" style="left:1521px;top:605px;width:108px;height:42px;background:#f9eca8"></div>
<div class="cell" style="left:1630px;top:605px;width:108px;height:42px;background:#fff4c4"></div>
<div class="cell" style="left:1739px;top:605px;width:108px;height:42px;background:#f9eca8"></div>
<svg class="a" style="left:10px;top:613px" width="18" height="26"><polyline points="5.9,6.85 11.4,12.35 5.9,17.85" fill="none" stroke="#a6a6a6" stroke-width="2.5"/></svg>
<div class="a" style="left:43px;top:613px;width:24px;height:24px"><svg width="24" height="24" viewBox="0 0 24 24"><defs><linearGradient id="gg15" x1="0" y1="0" x2="1" y2="1"><stop offset="0" stop-color="#c8f2fe"/><stop offset="1" stop-color="#7aa3e4"/></linearGradient></defs><rect x="0.5" y="0.5" width="23" height="23" fill="url(#gg15)" stroke="#a9c3e2"/><use href="#gearshape"/></svg></div>
<div class="a" style="left:75.00px;top:618px;font-size:17.5px;line-height:17.5px;letter-spacing:-0.200px">Узел службы: локальная система (13)</div>
<div class="a" style="left:483.40px;top:618px;font-size:17.5px;line-height:17.5px;letter-spacing:-0.180px">svchost.exe</div>
<div class="a" style="left:654.70px;top:618px;font-size:17.5px;line-height:17.5px;letter-spacing:0.139px">C:\Windows\system32\svchost.exe -k netsvcs</div>
<div class="a" style="left:1470.40px;top:618px;font-size:17.5px;line-height:17.5px;letter-spacing:0.300px">0,1%</div>
<div class="a" style="left:1555.30px;top:618px;font-size:17.5px;line-height:17.5px">16,3 МБ</div>
<div class="a" style="left:1672.50px;top:618px;font-size:17.5px;line-height:17.5px;letter-spacing:0.520px">0 МБ/с</div>
<div class="a" style="left:1748.41px;top:618px;font-size:17.5px;line-height:17.5px;letter-spacing:0.543px">0,1 Мбит/с</div>
<div class="cell" style="left:1411px;top:647px;width:109px;height:42px;background:#fff4c4"></div>
<div class="cell" style="left:1521px;top:647px;width:108px;height:42px;background:#f9eca8"></div>
<div class="cell" style="left:1630px;top:647px;width:108px;height:42px;background:#fff4c4"></div>
<div class="cell" style="left:1739px;top:647px;width:108px;height:42px;background:#fff4c4"></div>
<svg class="a" style="left:10px;top:655px" width="18" height="26"><polyline points="5.9,6.85 11.4,12.35 5.9,17.85" fill="none" stroke="#a6a6a6" stroke-width="2.5"/></svg>
<div class="a" style="left:43px;top:655px;width:24px;height:24px"><svg width="24" height="24" viewBox="0 0 24 24"><defs><linearGradient id="gg16" x1="0" y1="0" x2="1" y2="1"><stop offset="0" stop-color="#c8f2fe"/><stop offset="1" stop-color="#7aa3e4"/></linearGradient></defs><rect x="0.5" y="0.5" width="23" height="23" fill="url(#gg16)" stroke="#a9c3e2"/><use href="#gearshape"/></svg></div>
<div class="a" style="left:75.00px;top:660px;font-size:17.5px;line-height:17.5px;letter-spacing:0.147px">Узел службы: удаленный вызов процедур (2)</div>
<div class="a" style="left:483.40px;top:660px;font-size:17.5px;line-height:17.5px;letter-spacing:-0.180px">svchost.exe</div>
<div class="a" style="left:654.70px;top:660px;font-size:17.5px;line-height:17.5px">C:\Windows\system32\svchost.exe -k RPCSS</div>
<div class="a" style="left:1485.00px;top:660px;font-size:17.5px;line-height:17.5px;letter-spacing:0.300px">0%</div>
<div class="a" style="left:1564.30px;top:660px;font-size:17.5px;line-height:17.5px">3,1 МБ</div>
<div class="a" style="left:1672.50px;top:660px;font-size:17.5px;line-height:17.5px;letter-spacing:0.520px">0 МБ/с</div>
<div class="a" style="left:1764.50px;top:660px;font-size:17.5px;line-height:17.5px;letter-spacing:0.543px">0 Мбит/с</div>
<div class="cell" style="left:1411px;top:689px;width:109px;height:42px;background:#fff4c4"></div>
<div class="cell" style="left:1521px;top:689px;width:108px;height:42px;background:#f9eca8"></div>
<div class="cell" style="left:1630px;top:689px;width:108px;height:42px;background:#fff4c4"></div>
<div class="cell" style="left:1739px;top:689px;width:108px;height:42px;background:#fff4c4"></div>
<svg class="a" style="left:10px;top:697px" width="18" height="26"><polyline points="5.9,6.85 11.4,12.35 5.9,17.85" fill="none" stroke="#a6a6a6" stroke-width="2.5"/></svg>
<div class="a" style="left:43px;top:697px;width:24px;height:24px"><svg width="24" height="24" viewBox="0 0 24 24"><defs><linearGradient id="gg17" x1="0" y1="0" x2="1" y2="1"><stop offset="0" stop-color="#c8f2fe"/><stop offset="1" stop-color="#7aa3e4"/></linearGradient></defs><rect x="0.5" y="0.5" width="23" height="23" fill="url(#gg17)" stroke="#a9c3e2"/><use href="#gearshape"/></svg></div>
<div class="a" style="left:75.00px;top:702px;font-size:17.5px;line-height:17.5px;letter-spacing:0.030px">Узел службы: модуль запуска процессов DCO...</div>
<div class="a" style="left:483.40px;top:702px;font-size:17.5px;line-height:17.5px;letter-spacing:-0.180px">svchost.exe</div>
<div class="a" style="left:654.70px;top:702px;font-size:17.5px;line-height:17.5px;letter-spacing:0.170px">C:\Windows\system32\svchost.exe -k DcomLaunch</div>
<div class="a" style="left:1485.00px;top:702px;font-size:17.5px;line-height:17.5px;letter-spacing:0.300px">0%</div>
<div class="a" style="left:1564.30px;top:702px;font-size:17.5px;line-height:17.5px">4,6 МБ</div>
<div class="a" style="left:1672.50px;top:702px;font-size:17.5px;line-height:17.5px;letter-spacing:0.520px">0 МБ/с</div>
<div class="a" style="left:1764.50px;top:702px;font-size:17.5px;line-height:17.5px;letter-spacing:0.543px">0 Мбит/с</div>
<div class="cell" style="left:1411px;top:731px;width:109px;height:42px;background:#fff4c4"></div>
<div class="cell" style="left:1521px;top:731px;width:108px;height:42px;background:#f9eca8"></div>
<div class="cell" style="left:1630px;top:731px;width:108px;height:42px;background:#fff4c4"></div>
<div class="cell" style="left:1739px;top:731px;width:108px;height:42px;background:#fff4c4"></div>
<div class="a" style="left:43px;top:739px;width:24px;height:24px"><svg width="24" height="24" viewBox="0 0 24 24"><rect x="1.5" y="4.5" width="21" height="16" fill="#f4f4f4" stroke="#707070"/><rect x="2" y="5" width="20" height="1" fill="#9a9a9a"/><rect x="2" y="6" width="4" height="14" fill="#e6e6e6"/><rect x="7" y="8" width="8" height="10" fill="#1a75dc"/><rect x="3" y="8" width="2" height="0.9" fill="#888"/><rect x="3" y="10" width="2" height="0.9" fill="#888"/><rect x="3" y="12" width="2" height="0.9" fill="#888"/><rect x="16.5" y="8" width="4" height="0.9" fill="#777"/><rect x="16.5" y="10" width="4" height="0.9" fill="#777"/><rect x="16.5" y="12" width="4" height="0.9" fill="#777"/><rect x="16.5" y="14" width="3" height="0.9" fill="#777"/></svg></div>
<div class="a" style="left:75.00px;top:744px;font-size:17.5px;line-height:17.5px;letter-spacing:0.159px">Хост-процесс для задач Windows</div>
<div class="a" style="left:484.40px;top:744px;font-size:17.5px;line-height:17.5px;letter-spacing:0.033px">taskhostw.exe</div>
<div class="a" style="left:655.70px;top:744px;font-size:17.5px;line-height:17.5px;letter-spacing:-0.039px">taskhostw.exe {222A245B-E637-4AE9-A93F-A59CA119A75E}</div>
<div class="a" style="left:1485.00px;top:744px;font-size:17.5px;line-height:17.5px;letter-spacing:0.300px">0%</div>
<div class="a" style="left:1564.30px;top:744px;font-size:17.5px;line-height:17.5px">2,8 МБ</div>
<div class="a" style="left:1672.50px;top:744px;font-size:17.5px;line-height:17.5px;letter-spacing:0.520px">0 МБ/с</div>
<div class="a" style="left:1764.50px;top:744px;font-size:17.5px;line-height:17.5px;letter-spacing:0.543px">0 Мбит/с</div>
<div class="cell" style="left:1411px;top:773px;width:109px;height:42px;background:#f9eca8"></div>
<div class="cell" style="left:1521px;top:773px;width:108px;height:42px;background:#f9eca8"></div>
<div class="cell" style="left:1630px;top:773px;width:108px;height:42px;background:#fff4c4"></div>
<div class="cell" style="left:1739px;top:773px;width:108px;height:42px;background:#fff4c4"></div>
<svg class="a" style="left:10px;top:781px" width="18" height="26"><polyline points="5.9,6.85 11.4,12.35 5.9,17.85" fill="none" stroke="#a6a6a6" stroke-width="2.5"/></svg>
<div class="a" style="left:43px;top:781px;width:24px;height:24px"><svg width="24" height="24" viewBox="0 0 24 24"><rect x="2.3" y="7.3" width="5" height="11.4" rx="1" fill="#d6d4dc" stroke="#a8a6b0" stroke-width="0.8"/><rect x="3.2" y="8.6" width="1.6" height="2.2" fill="#5cc040"/><ellipse cx="15" cy="20.7" rx="5.8" ry="2" fill="#d4d4d4" stroke="#b0b0b0" stroke-width="0.7"/><rect x="13" y="16.5" width="4" height="3" fill="#c4c4c4"/><rect x="7.6" y="4.4" width="14.4" height="12.3" fill="#e4e4e6" stroke="#b2b2b6" stroke-width="0.9"/><rect x="8.7" y="5.5" width="12.2" height="10.2" fill="#f6fbff"/><path d="M8.7,10.5 L10.5,12.8 L12.5,8 L14,11.5 L16.5,13 L19,10.5 L20.9,12.8 L20.9,15.7 L8.7,15.7 Z" fill="#cfe6f6"/><polyline points="8.7,10.5 10.5,12.8 12.5,8 14,11.5 16.5,13 19,10.5 20.6,12.8" fill="none" stroke="#3a8ad0" stroke-width="0.9"/></svg></div>
<div class="a" style="left:76.00px;top:786px;font-size:17.5px;line-height:17.5px;letter-spacing:-0.200px">Task Manager</div>
<div class="a" style="left:484.40px;top:786px;font-size:17.5px;line-height:17.5px;letter-spacing:-0.260px">Taskmgr.exe</div>
<div class="a" style="left:654.70px;top:786px;font-size:17.5px;line-height:17.5px;letter-spacing:0.357px">"C:\Windows\system32\taskmgr.exe" /4</div>
<div class="a" style="left:1470.40px;top:786px;font-size:17.5px;line-height:17.5px;letter-spacing:0.300px">0,4%</div>
<div class="a" style="left:1564.30px;top:786px;font-size:17.5px;line-height:17.5px">9,5 МБ</div>
<div class="a" style="left:1672.50px;top:786px;font-size:17.5px;line-height:17.5px;letter-spacing:0.520px">0 МБ/с</div>
<div class="a" style="left:1764.50px;top:786px;font-size:17.5px;line-height:17.5px;letter-spacing:0.543px">0 Мбит/с</div>
<div class="cell" style="left:1411px;top:815px;width:109px;height:42px;background:#fff4c4"></div>
<div class="cell" style="left:1521px;top:815px;width:108px;height:42px;background:#f9eca8"></div>
<div class="cell" style="left:1630px;top:815px;width:108px;height:42px;background:#fff4c4"></div>
<div class="cell" style="left:1739px;top:815px;width:108px;height:42px;background:#fff4c4"></div>
<div class="a" style="left:43px;top:823px;width:24px;height:24px"><svg width="24" height="24" viewBox="0 0 24 24"><rect x="0" y="0" width="24" height="24" rx="3" fill="#3e3e3e"/><circle cx="12.1" cy="11.7" r="8.1" fill="none" stroke="#f2f2f2" stroke-width="2.6"/><path d="M12.1,3.6 A8.1,8.1 0 0,1 20.1,10.3" fill="none" stroke="#f04a1a" stroke-width="2.8"/><circle cx="12.1" cy="11.7" r="6.4" fill="#454545"/><line x1="10.9" y1="12.8" x2="15.4" y2="9.3" stroke="#eee" stroke-width="1.9"/></svg></div>
<div class="a" style="left:76.00px;top:828px;font-size:17.5px;line-height:17.5px;letter-spacing:-0.195px">TotalMix FX (32 бита)</div>
<div class="a" style="left:484.40px;top:828px;font-size:17.5px;line-height:17.5px;letter-spacing:-0.377px">TotalMixFX.exe</div>
<div class="a" style="left:654.70px;top:828px;font-size:17.5px;line-height:17.5px;letter-spacing:0.106px">"C:\Windows\System32\TotalMixFX.exe"</div>
<div class="a" style="left:1485.00px;top:828px;font-size:17.5px;line-height:17.5px;letter-spacing:0.300px">0%</div>
<div class="a" style="left:1564.30px;top:828px;font-size:17.5px;line-height:17.5px">7,1 МБ</div>
<div class="a" style="left:1672.50px;top:828px;font-size:17.5px;line-height:17.5px;letter-spacing:0.520px">0 МБ/с</div>
<div class="a" style="left:1764.50px;top:828px;font-size:17.5px;line-height:17.5px;letter-spacing:0.543px">0 Мбит/с</div>
<div class="cell" style="left:1411px;top:857px;width:109px;height:42px;background:#fff4c4"></div>
<div class="cell" style="left:1521px;top:857px;width:108px;height:42px;background:#f9eca8"></div>
<div class="cell" style="left:1630px;top:857px;width:108px;height:42px;background:#fff4c4"></div>
<div class="cell" style="left:1739px;top:857px;width:108px;height:42px;background:#fff4c4"></div>
<div class="a" style="left:43px;top:865px;width:24px;height:24px"><svg width="24" height="24" viewBox="0 0 24 24"><rect x="1.5" y="4.5" width="21" height="16" fill="#f4f4f4" stroke="#707070"/><rect x="2" y="5" width="20" height="1" fill="#9a9a9a"/><rect x="2" y="6" width="4" height="14" fill="#e6e6e6"/><rect x="7" y="8" width="8" height="10" fill="#1a75dc"/><rect x="3" y="8" width="2" height="0.9" fill="#888"/><rect x="3" y="10" width="2" height="0.9" fill="#888"/><rect x="3" y="12" width="2" height="0.9" fill="#888"/><rect x="16.5" y="8" width="4" height="0.9" fill="#777"/><rect x="16.5" y="10" width="4" height="0.9" fill="#777"/><rect x="16.5" y="12" width="4" height="0.9" fill="#777"/><rect x="16.5" y="14" width="3" height="0.9" fill="#777"/></svg></div>
<div class="a" style="left:76.00px;top:870px;font-size:17.5px;line-height:17.5px;letter-spacing:0.347px">Автозагрузка приложений Windows</div>
<div class="a" style="left:484.40px;top:870px;font-size:17.5px;line-height:17.5px;letter-spacing:-0.080px">wininit.exe</div>
<div class="a" style="left:1485.00px;top:870px;font-size:17.5px;line-height:17.5px;letter-spacing:0.300px">0%</div>
<div class="a" style="left:1564.30px;top:870px;font-size:17.5px;line-height:17.5px">0,8 МБ</div>
<div class="a" style="left:1672.50px;top:870px;font-size:17.5px;line-height:17.5px;letter-spacing:0.520px">0 МБ/с</div>
<div class="a" style="left:1764.50px;top:870px;font-size:17.5px;line-height:17.5px;letter-spacing:0.543px">0 Мбит/с</div>
<div class="cell" style="left:1411px;top:899px;width:109px;height:42px;background:#fff4c4"></div>
<div class="cell" style="left:1521px;top:899px;width:108px;height:42px;background:#f9eca8"></div>
<div class="cell" style="left:1630px;top:899px;width:108px;height:42px;background:#fff4c4"></div>
<div class="cell" style="left:1739px;top:899px;width:108px;height:42px;background:#fff4c4"></div>
<div class="a" style="left:43px;top:907px;width:24px;height:24px"><svg width="24" height="24" viewBox="0 0 24 24"><defs><linearGradient id="wl22" x1="0" y1="0" x2="1" y2="1"><stop offset="0" stop-color="#2f5fa8"/><stop offset="1" stop-color="#5cb86a"/></linearGradient><linearGradient id="wb22" x1="0" y1="0" x2="0" y2="1"><stop offset="0" stop-color="#2a55a8"/><stop offset="1" stop-color="#52b050"/></linearGradient></defs><rect x="1" y="2.8" width="20.5" height="17.4" rx="1.2" fill="#fbfbfb" stroke="#858a90" stroke-width="1.2"/><rect x="1.6" y="3.4" width="19.3" height="1.6" fill="#d6dde6"/><rect x="17.2" y="3.6" width="0.9" height="1.2" fill="#3c5a8a"/><rect x="19" y="3.6" width="0.9" height="1.2" fill="#3c5a8a"/><rect x="3" y="5.9" width="7.9" height="11" fill="url(#wl22)"/><rect x="12.4" y="6.2" width="3.5" height="0.8" fill="#9a9a9a"/><rect x="12.4" y="8.2" width="3.5" height="0.8" fill="#9a9a9a"/><rect x="12.4" y="10.1" width="3.5" height="0.8" fill="#9a9a9a"/><rect x="12.4" y="12.1" width="3.5" height="0.8" fill="#9a9a9a"/><rect x="12.4" y="15" width="3.5" height="0.8" fill="#9a9a9a"/><rect x="12.4" y="17.1" width="3.5" height="0.8" fill="#9a9a9a"/><rect x="16.9" y="5.9" width="2.1" height="7" fill="url(#wb22)"/></svg></div>
<div class="a" style="left:75.00px;top:912px;font-size:17.5px;line-height:17.5px;letter-spacing:0.284px">Программа входа в систему Windows</div>
<div class="a" style="left:484.40px;top:912px;font-size:17.5px;line-height:17.5px;letter-spacing:0.091px">winlogon.exe</div>
<div class="a" style="left:655.70px;top:912px;font-size:17.5px;line-height:17.5px;letter-spacing:0.082px">winlogon.exe</div>
<div class="a" style="left:1485.00px;top:912px;font-size:17.5px;line-height:17.5px;letter-spacing:0.300px">0%</div>
<div class="a" style="left:1564.30px;top:912px;font-size:17.5px;line-height:17.5px">1,2 МБ</div>
<div class="a" style="left:1672.50px;top:912px;font-size:17.5px;line-height:17.5px;letter-spacing:0.520px">0 МБ/с</div>
<div class="a" style="left:1764.50px;top:912px;font-size:17.5px;line-height:17.5px;letter-spacing:0.543px">0 Мбит/с</div>
<div class="cell" style="left:1411px;top:941px;width:109px;height:42px;background:#fff4c4"></div>
<div class="cell" style="left:1521px;top:941px;width:108px;height:42px;background:#f9eca8"></div>
<div class="cell" style="left:1630px;top:941px;width:108px;height:42px;background:#fff4c4"></div>
<div class="cell" style="left:1739px;top:941px;width:108px;height:42px;background:#fff4c4"></div>
<svg class="a" style="left:10px;top:949px" width="18" height="26"><polyline points="5.9,6.85 11.4,12.35 5.9,17.85" fill="none" stroke="#a6a6a6" stroke-width="2.5"/></svg>
<div class="a" style="left:43px;top:949px;width:24px;height:24px"><svg width="24" height="24" viewBox="0 0 24 24"><rect x="1.5" y="4.5" width="21" height="16" fill="#f4f4f4" stroke="#707070"/><rect x="2" y="5" width="20" height="1" fill="#9a9a9a"/><rect x="2" y="6" width="4" height="14" fill="#e6e6e6"/><rect x="7" y="8" width="8" height="10" fill="#1a75dc"/><rect x="3" y="8" width="2" height="0.9" fill="#888"/><rect x="3" y="10" width="2" height="0.9" fill="#888"/><rect x="3" y="12" width="2" height="0.9" fill="#888"/><rect x="16.5" y="8" width="4" height="0.9" fill="#777"/><rect x="16.5" y="10" width="4" height="0.9" fill="#777"/><rect x="16.5" y="12" width="4" height="0.9" fill="#777"/><rect x="16.5" y="14" width="3" height="0.9" fill="#777"/></svg></div>
<div class="a" style="left:75.00px;top:954px;font-size:17.5px;line-height:17.5px;letter-spacing:0.197px">Обратный адаптер производительности WMI</div>
<div class="a" style="left:484.40px;top:954px;font-size:17.5px;line-height:17.5px;letter-spacing:0.036px">WmiApSrv.exe</div>
<div class="a" style="left:654.70px;top:954px;font-size:17.5px;line-height:17.5px;letter-spacing:0.389px">C:\Windows\system32\wbem\WmiApSrv.exe</div>
<div class="a" style="left:1485.00px;top:954px;font-size:17.5px;line-height:17.5px;letter-spacing:0.300px">0%</div>
<div class="a" style="left:1564.30px;top:954px;font-size:17.5px;line-height:17.5px">1,2 МБ</div>
<div class="a" style="left:1672.50px;top:954px;font-size:17.5px;line-height:17.5px;letter-spacing:0.520px">0 МБ/с</div>
<div class="a" style="left:1764.50px;top:954px;font-size:17.5px;line-height:17.5px;letter-spacing:0.543px">0 Мбит/с</div>
<div class="cell" style="left:1411px;top:983px;width:109px;height:42px;background:#f9eca8"></div>
<div class="cell" style="left:1521px;top:983px;width:108px;height:42px;background:#f9eca8"></div>
<div class="cell" style="left:1630px;top:983px;width:108px;height:42px;background:#fff4c4"></div>
<div class="cell" style="left:1739px;top:983px;width:108px;height:42px;background:#fff4c4"></div>
<div class="a" style="left:43px;top:991px;width:24px;height:24px"><svg width="24" height="24" viewBox="0 0 24 24"><defs><linearGradient id="tb24" x1="0" y1="0" x2="0" y2="1"><stop offset="0" stop-color="#d2dae0"/><stop offset="0.5" stop-color="#a5b2bc"/><stop offset="1" stop-color="#6f7f8a"/></linearGradient></defs><path d="M5,7 Q8.5,3.5 12,7" fill="none" stroke="#555" stroke-width="1"/><path d="M0.5,10 L3,7 L15.5,7 L17.5,10 L17.5,20 L0.5,20 Z" fill="url(#tb24)" stroke="#66747e" stroke-width="0.8"/><line x1="0.8" y1="12.5" x2="17.2" y2="12.5" stroke="#7e8c96" stroke-width="0.7"/><rect x="4" y="11.5" width="1.6" height="3" fill="#eef2f4" stroke="#555" stroke-width="0.4"/><path d="M11.5,2.5 A3.2,3.2 0 1,0 17.5,4.5 L16,4.5 L15,3 L15.5,1.2 A3.2,3.2 0 0,0 11.5,2.5 Z" fill="#e4e8ea" stroke="#444" stroke-width="0.7"/><rect x="13" y="6.5" width="2" height="5" fill="#9aa"/><rect x="12.3" y="11" width="3.4" height="12" rx="1.5" fill="#2e6ad0" stroke="#1b3d7a" stroke-width="0.6"/><rect x="19.4" y="0.5" width="1.2" height="11" fill="#666"/><rect x="18.3" y="11.5" width="3.4" height="11.5" rx="1.5" fill="#2e6ad0" stroke="#1b3d7a" stroke-width="0.6"/></svg></div>
<div class="a" style="left:76.00px;top:996px;font-size:17.5px;line-height:17.5px;letter-spacing:0.312px">WMI Provider Host</div>
<div class="a" style="left:484.40px;top:996px;font-size:17.5px;line-height:17.5px;letter-spacing:-0.600px">WmiPrvSE.exe</div>
<div class="a" style="left:654.70px;top:996px;font-size:17.5px;line-height:17.5px;letter-spacing:0.336px">C:\Windows\system32\wbem\wmiprvse.exe</div>
<div class="a" style="left:1470.40px;top:996px;font-size:17.5px;line-height:17.5px;letter-spacing:0.300px">0,1%</div>
<div class="a" style="left:1564.30px;top:996px;font-size:17.5px;line-height:17.5px">6,5 МБ</div>
<div class="a" style="left:1672.50px;top:996px;font-size:17.5px;line-height:17.5px;letter-spacing:0.520px">0 МБ/с</div>
<div class="a" style="left:1764.50px;top:996px;font-size:17.5px;line-height:17.5px;letter-spacing:0.543px">0 Мбит/с</div>
<div class="cell" style="left:1411px;top:1025px;width:109px;height:42px;background:#ffd466"></div>
<div class="cell" style="left:1521px;top:1025px;width:108px;height:42px;background:#f9eca8"></div>
<div class="cell" style="left:1630px;top:1025px;width:108px;height:42px;background:#fff4c4"></div>
<div class="cell" style="left:1739px;top:1025px;width:108px;height:42px;background:#fff4c4"></div>
<div class="a" style="left:43px;top:1033px;width:24px;height:24px"><svg width="24" height="24" viewBox="0 0 24 24"><defs><linearGradient id="tb25" x1="0" y1="0" x2="0" y2="1"><stop offset="0" stop-color="#d2dae0"/><stop offset="0.5" stop-color="#a5b2bc"/><stop offset="1" stop-color="#6f7f8a"/></linearGradient></defs><path d="M5,7 Q8.5,3.5 12,7" fill="none" stroke="#555" stroke-width="1"/><path d="M0.5,10 L3,7 L15.5,7 L17.5,10 L17.5,20 L0.5,20 Z" fill="url(#tb25)" stroke="#66747e" stroke-width="0.8"/><line x1="0.8" y1="12.5" x2="17.2" y2="12.5" stroke="#7e8c96" stroke-width="0.7"/><rect x="4" y="11.5" width="1.6" height="3" fill="#eef2f4" stroke="#555" stroke-width="0.4"/><path d="M11.5,2.5 A3.2,3.2 0 1,0 17.5,4.5 L16,4.5 L15,3 L15.5,1.2 A3.2,3.2 0 0,0 11.5,2.5 Z" fill="#e4e8ea" stroke="#444" stroke-width="0.7"/><rect x="13" y="6.5" width="2" height="5" fill="#9aa"/><rect x="12.3" y="11" width="3.4" height="12" rx="1.5" fill="#2e6ad0" stroke="#1b3d7a" stroke-width="0.6"/><rect x="19.4" y="0.5" width="1.2" height="11" fill="#666"/><rect x="18.3" y="11.5" width="3.4" height="11.5" rx="1.5" fill="#2e6ad0" stroke="#1b3d7a" stroke-width="0.6"/></svg></div>
<div class="a" style="left:76.00px;top:1038px;font-size:17.5px;line-height:17.5px;letter-spacing:0.312px">WMI Provider Host</div>
<div class="a" style="left:484.40px;top:1038px;font-size:17.5px;line-height:17.5px;letter-spacing:-0.600px">WmiPrvSE.exe</div>
<div class="a" style="left:654.70px;top:1038px;font-size:17.5px;line-height:17.5px;letter-spacing:0.336px">C:\Windows\system32\wbem\wmiprvse.exe</div>
<div class="a" style="left:1460.10px;top:1038px;font-size:17.5px;line-height:17.5px;letter-spacing:0.300px">23,9%</div>
<div class="a" style="left:1555.30px;top:1038px;font-size:17.5px;line-height:17.5px">14,6 МБ</div>
<div class="a" style="left:1672.50px;top:1038px;font-size:17.5px;line-height:17.5px;letter-spacing:0.520px">0 МБ/с</div>
<div class="a" style="left:1764.50px;top:1038px;font-size:17.5px;line-height:17.5px;letter-spacing:0.543px">0 Мбит/с</div>
<div class="cell" style="left:1411px;top:1067px;width:109px;height:42px;background:#fff4c4"></div>
<div class="cell" style="left:1521px;top:1067px;width:108px;height:42px;background:#f9eca8"></div>
<div class="cell" style="left:1630px;top:1067px;width:108px;height:42px;background:#fff4c4"></div>
<div class="cell" style="left:1739px;top:1067px;width:108px;height:42px;background:#fff4c4"></div>
<div class="a" style="left:43px;top:1075px;width:24px;height:24px"><svg width="24" height="24" viewBox="0 0 24 24"><rect x="1.5" y="4.5" width="21" height="16" fill="#f4f4f4" stroke="#707070"/><rect x="2" y="5" width="20" height="1" fill="#9a9a9a"/><rect x="2" y="6" width="4" height="14" fill="#e6e6e6"/><rect x="7" y="8" width="8" height="10" fill="#1a75dc"/><rect x="3" y="8" width="2" height="0.9" fill="#888"/><rect x="3" y="10" width="2" height="0.9" fill="#888"/><rect x="3" y="12" width="2" height="0.9" fill="#888"/><rect x="16.5" y="8" width="4" height="0.9" fill="#777"/><rect x="16.5" y="10" width="4" height="0.9" fill="#777"/><rect x="16.5" y="12" width="4" height="0.9" fill="#777"/><rect x="16.5" y="14" width="3" height="0.9" fill="#777"/></svg></div>
<div class="a" style="left:76.00px;top:1080px;font-size:17.5px;line-height:17.5px;letter-spacing:0.196px">Windows Driver Foundation (WDF) - хост-проц...</div>
<div class="a" style="left:484.40px;top:1080px;font-size:17.5px;line-height:17.5px;letter-spacing:-0.291px">WUDFHost.exe</div>
<div class="a" style="left:654.70px;top:1080px;font-size:17.5px;line-height:17.5px;letter-spacing:0.181px">"C:\Windows\System32\WUDFHost.exe" -HostGUID:{193a1820-d9ac-4997-8c55-be817523f...</div>
<div class="a" style="left:1485.00px;top:1080px;font-size:17.5px;line-height:17.5px;letter-spacing:0.300px">0%</div>
<div class="a" style="left:1564.30px;top:1080px;font-size:17.5px;line-height:17.5px">1,4 МБ</div>
<div class="a" style="left:1672.50px;top:1080px;font-size:17.5px;line-height:17.5px;letter-spacing:0.520px">0 МБ/с</div>
<div class="a" style="left:1764.50px;top:1080px;font-size:17.5px;line-height:17.5px;letter-spacing:0.543px">0 Мбит/с</div>
<div class="sep" style="left:1520px;top:0;height:1109px"></div>
<div class="sep" style="left:1629px;top:0;height:1109px"></div>
<div class="sep" style="left:1738px;top:0;height:1109px"></div>
<div class="sep" style="left:1847px;top:0;height:1109px"></div>
</div>
<div class="a" style="left:21px;top:221px;width:1886px;height:2px;background:#a0a0a0"></div>
<div class="a" style="left:20px;top:132px;width:1px;height:1201px;background:#f2f2f2"></div>
<div class="a" style="left:1882px;top:223px;width:24px;height:1109px;background:#f0f0f0"></div>
<div class="a" style="left:1882px;top:823px;width:24px;height:465px;background:#cdcdcd"></div>
<svg class="a" style="left:1882px;top:223px" width="24" height="30"><polyline points="6.8,19.3 12,13.6 17.2,19.3" fill="none" stroke="#606060" stroke-width="2.4"/></svg>
<svg class="a" style="left:1882px;top:1302px" width="24" height="30"><polyline points="6.8,13.8 12,19.5 17.2,13.8" fill="none" stroke="#606060" stroke-width="2.4"/></svg>
<div class="a" style="left:21px;top:1332px;width:1886px;height:2px;background:#a0a0a0"></div>
<svg class="a" style="left:30px;top:1354px" width="32" height="32"><circle cx="15.5" cy="15.5" r="14.3" fill="none" stroke="#a6a6a6" stroke-width="1.1"/><polyline points="9.5,17.5 15.5,11.5 21.5,17.5" fill="none" stroke="#a6a6a6" stroke-width="1.3"/></svg>
<div class="a" style="left:71.30px;top:1363px;font-size:17.5px;line-height:17.5px;letter-spacing:0.020px">Меньше</div>
<div class="a" style="left:1768px;top:1352px;width:126px;height:33px;background:#cccccc;border:1px solid #b8b8b8"></div>
<div class="a" style="left:1777.50px;top:1361px;font-size:17px;line-height:17px;color:#8791a6">Снять задачу</div>
<svg width="0" height="0" style="position:absolute"><defs><path id="gearshape" d="M18.04,9.33 L20.38,9.28 L20.80,12.27 L18.54,12.87 L18.13,14.46 L19.81,16.07 L18.00,18.48 L15.98,17.31 L14.57,18.14 L14.62,20.48 L11.63,20.90 L11.03,18.64 L9.44,18.23 L7.83,19.91 L5.42,18.10 L6.59,16.08 L5.76,14.67 L3.42,14.72 L3.00,11.73 L5.26,11.13 L5.67,9.54 L3.99,7.93 L5.80,5.52 L7.82,6.69 L9.23,5.86 L9.18,3.52 L12.17,3.10 L12.77,5.36 L14.36,5.77 L15.97,4.09 L18.38,5.90 L17.21,7.92 Z M11.9,8.7 A3.3,3.3 0 1,0 11.9,15.3 A3.3,3.3 0 1,0 11.9,8.7 Z" fill="#fff" fill-rule="evenodd" stroke="#7aa6e0" stroke-width="0.9"/></defs></svg>
</body></html>
